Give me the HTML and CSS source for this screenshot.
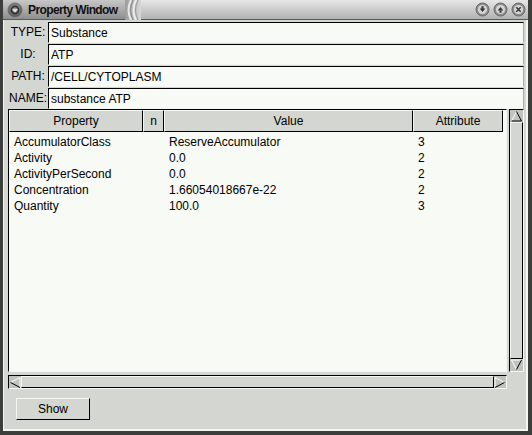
FILE: index.html
```html
<!DOCTYPE html>
<html>
<head>
<meta charset="utf-8">
<link rel="stylesheet" href="styles.css">
</head>
<body>
<div class="window">
  <div class="titlebar">
    <div class="tb-left">
      <svg class="menu-btn" width="16" height="16" viewBox="0 0 16 16">
        <defs>
          <radialGradient id="mg" cx="50%" cy="35%" r="60%">
            <stop offset="0" stop-color="#9a9a9a"/>
            <stop offset="1" stop-color="#5a5a5a"/>
          </radialGradient>
        </defs>
        <circle cx="8" cy="8" r="7" fill="url(#mg)" stroke="#6e6e6e" stroke-width="1"/>
        <circle cx="8" cy="8" r="3.6" fill="none" stroke="#2e2e2e" stroke-width="1.6"/>
        <path d="M5 7.2 L11 7.2 L8 10.4 Z" fill="#e6e6e6"/>
      </svg>
      <span class="title">Property Window</span>
    </div>
    <svg class="deco" width="16" height="20" viewBox="0 0 16 20">
      <path d="M6 0 Q1 10 6 20" fill="none" stroke="#e8e8e8" stroke-width="2"/>
      <path d="M8 0 Q3 10 8 20" fill="none" stroke="#8a8a8a" stroke-width="1"/>
      <path d="M11 0 Q6 10 11 20" fill="none" stroke="#ececec" stroke-width="2"/>
      <path d="M13 0 Q8 10 13 20" fill="none" stroke="#9a9a9a" stroke-width="1"/>
    </svg>
    <div class="tb-right">
      <svg class="tbtn" width="15" height="15" viewBox="0 0 15 15">
        <circle cx="7.5" cy="7.5" r="6.5" fill="#8c8c8c" stroke="#6a6a6a"/>
        <circle cx="7.5" cy="7.5" r="4.6" fill="#d6d6d6"/>
        <path d="M4.6 6.6 L10.4 6.6 L7.5 10 Z M6.4 4.2 H8.6 V6.8 H6.4 Z" fill="#3a3a3a"/>
      </svg>
      <svg class="tbtn" width="15" height="15" viewBox="0 0 15 15">
        <circle cx="7.5" cy="7.5" r="6.5" fill="#8c8c8c" stroke="#6a6a6a"/>
        <circle cx="7.5" cy="7.5" r="4.6" fill="#d6d6d6"/>
        <path d="M4.6 8.4 L10.4 8.4 L7.5 5 Z M6.4 8.2 H8.6 V10.8 H6.4 Z" fill="#3a3a3a"/>
      </svg>
      <svg class="tbtn" width="15" height="15" viewBox="0 0 15 15">
        <circle cx="7.5" cy="7.5" r="6.5" fill="#8c8c8c" stroke="#6a6a6a"/>
        <circle cx="7.5" cy="7.5" r="4.6" fill="#d6d6d6"/>
        <path d="M5.3 5.3 L9.7 9.7 M9.7 5.3 L5.3 9.7" stroke="#3a3a3a" stroke-width="1.6"/>
      </svg>
    </div>
  </div>

  <div class="body">
    <div class="fields">
      <div class="label">TYPE:</div><div class="entry">Substance</div>
      <div class="label">ID:</div><div class="entry">ATP</div>
      <div class="label">PATH:</div><div class="entry">/CELL/CYTOPLASM</div>
      <div class="label">NAME:</div><div class="entry">substance ATP</div>
    </div>

    <div class="listarea">
      <div class="listrow">
        <div class="tree">
          <div class="thead">
            <div class="th">Property</div>
            <div class="th">n</div>
            <div class="th">Value</div>
            <div class="th">Attribute</div>
          </div>
          <div class="rows">
            <div class="tr"><span>AccumulatorClass</span><span></span><span>ReserveAccumulator</span><span>3</span></div>
            <div class="tr"><span>Activity</span><span></span><span>0.0</span><span>2</span></div>
            <div class="tr"><span>ActivityPerSecond</span><span></span><span>0.0</span><span>2</span></div>
            <div class="tr"><span>Concentration</span><span></span><span>1.66054018667e-22</span><span>2</span></div>
            <div class="tr"><span>Quantity</span><span></span><span>100.0</span><span>3</span></div>
          </div>
        </div>
        <div class="vscroll">
          <div class="arrow-v">
            <svg width="13" height="12" viewBox="0 0 13 12">
              <path d="M1.5 11 L6.5 1.5" stroke="#fff" stroke-width="1"/>
              <path d="M6.5 1.5 L11.5 11 L1.5 11" fill="none" stroke="#000" stroke-width="1"/>
            </svg>
          </div>
          <div class="vthumb"></div>
          <div class="arrow-v">
            <svg width="13" height="12" viewBox="0 0 13 12">
              <path d="M1.5 1 L11.5 1 M1.5 1 L6.5 10.5" fill="none" stroke="#fff" stroke-width="1"/>
              <path d="M6.5 10.5 L11.5 1" stroke="#000" stroke-width="1"/>
            </svg>
          </div>
        </div>
      </div>
      <div class="hscroll">
        <div class="arrow-h">
          <svg width="12" height="12" viewBox="0 0 12 12">
            <path d="M11 1.5 L1.5 6.5 M11 1.5 L11 11.5" fill="none" stroke="#fff" stroke-width="1"/>
            <path d="M1.5 6.5 L11 11.5" stroke="#000" stroke-width="1"/>
          </svg>
        </div>
        <div class="hthumb"></div>
        <div class="arrow-h">
          <svg width="12" height="12" viewBox="0 0 12 12">
            <path d="M1 1.5 L1 11.5 M1 1.5 L10.5 6.5" fill="none" stroke="#fff" stroke-width="1"/>
            <path d="M10.5 6.5 L1 11.5" stroke="#000" stroke-width="1"/>
          </svg>
        </div>
      </div>
    </div>

    <div class="buttons">
      <button class="btn">Show</button>
    </div>
  </div>
</div>
</body>
</html>
```

FILE: styles.css
```css
html, body {
  margin: 0;
  padding: 0;
  background: #d3d6d1;
}
body {
  font-family: "Liberation Sans", Arial, sans-serif;
  font-size: 12px;
  color: #000;
}
.window {
  box-sizing: border-box;
  width: 532px;
  height: 435px;
  border-left: 3px solid #3c3e3c;
  border-right: 4px solid #3c3e3c;
  border-bottom: 4px solid #3c3e3c;
  background: #d3d6d1;
  display: flex;
  flex-direction: column;
}
.titlebar {
  height: 20px;
  flex: none;
  display: flex;
  align-items: stretch;
  background: linear-gradient(#e6e6e6, #b2b2b2);
  border-bottom: 1px solid #5a5a5a;
  box-sizing: border-box;
}
.tb-left {
  display: flex;
  align-items: center;
  padding-left: 4px;
  width: 118px;
  background: linear-gradient(#c8c8c8, #8e8e8e);
}
.menu-btn { flex: none; }
.title {
  margin-left: 5px;
  font-weight: bold;
  font-size: 12px;
  letter-spacing: -0.6px;
  color: #111;
  white-space: nowrap;
}
.deco {
  flex: none;
  background: linear-gradient(90deg, #9c9c9c, #d8d8d8);
}
.tb-right {
  flex: 1;
  display: flex;
  justify-content: flex-end;
  align-items: center;
  gap: 3px;
  padding-right: 2px;
}
.body {
  flex: 1;
  padding: 2px 4px 0 5px;
  box-shadow: inset 1px 0 0 #f4f6f2, inset -2px -2px 0 #f4f6f2;
  display: flex;
  flex-direction: column;
}
.fields {
  display: grid;
  grid-template-columns: 40px 1fr;
  row-gap: 1px;
}
.label {
  height: 21px;
  line-height: 21px;
  text-align: center;
  white-space: nowrap;
  font-size: 12px;
}
.entry {
  box-sizing: border-box;
  height: 21px;
  line-height: 20px;
  padding-left: 2px;
  background: #f7faf5;
  border-top: 1px solid #000;
  border-left: 1px solid #000;
  border-right: 1px solid #a9aca7;
  border-bottom: 1px solid #f4f6f2;
  white-space: nowrap;
}
.listarea {
  display: flex;
  flex-direction: column;
}
.listrow {
  display: flex;
  gap: 2px;
  height: 263px;
}
.tree {
  box-sizing: border-box;
  width: 499px;
  background: #f7faf5;
  border-top: 1px solid #000;
  border-left: 1px solid #000;
  border-right: 1px solid #f4f6f2;
  border-bottom: 1px solid #f4f6f2;
}
.thead, .tr {
  display: grid;
  grid-template-columns: 134px 21px 249px 90px;
}
.th {
  box-sizing: border-box;
  height: 22px;
  line-height: 20px;
  text-align: center;
  background: #d3d6d1;
  border-top: 1px solid #f4f6f2;
  border-left: 1px solid #f4f6f2;
  border-right: 1px solid #000;
  border-bottom: 1px solid #000;
}
.rows {
  padding-top: 2px;
}
.tr {
  height: 16px;
  line-height: 16px;
}
.tr span {
  padding-left: 5px;
  white-space: nowrap;
}
.vscroll {
  box-sizing: border-box;
  width: 15px;
  display: flex;
  flex-direction: column;
  background: #c0c3be;
  border-left: 1px solid #000;
  border-top: 1px solid #000;
  border-right: 1px solid #f4f6f2;
  border-bottom: 1px solid #f4f6f2;
}
.arrow-v {
  height: 12px;
  flex: none;
  display: flex;
  justify-content: center;
}
.vthumb {
  flex: 1;
  background: #d3d6d1;
  border-top: 1px solid #f4f6f2;
  border-left: 1px solid #f4f6f2;
  border-right: 1px solid #000;
  border-bottom: 1px solid #000;
}
.hscroll {
  box-sizing: border-box;
  margin-top: 3px;
  width: 499px;
  height: 14px;
  display: flex;
  background: #c0c3be;
  border-top: 1px solid #000;
  border-left: 1px solid #000;
  border-right: 1px solid #f4f6f2;
  border-bottom: 1px solid #f4f6f2;
}
.arrow-h {
  width: 12px;
  flex: none;
  display: flex;
  align-items: center;
}
.hthumb {
  flex: 1;
  background: #d3d6d1;
  border-top: 1px solid #f4f6f2;
  border-left: 1px solid #f4f6f2;
  border-right: 1px solid #000;
  border-bottom: 1px solid #000;
}
.buttons {
  padding: 9px 0 0 8px;
}
.btn {
  box-sizing: border-box;
  width: 74px;
  height: 22px;
  padding: 0;
  font-family: "Liberation Sans", Arial, sans-serif;
  font-size: 12px;
  color: #000;
  background: #d3d6d1;
  border-top: 1px solid #f4f6f2;
  border-left: 1px solid #f4f6f2;
  border-right: 1px solid #000;
  border-bottom: 1px solid #000;
  border-radius: 0;
}
```
